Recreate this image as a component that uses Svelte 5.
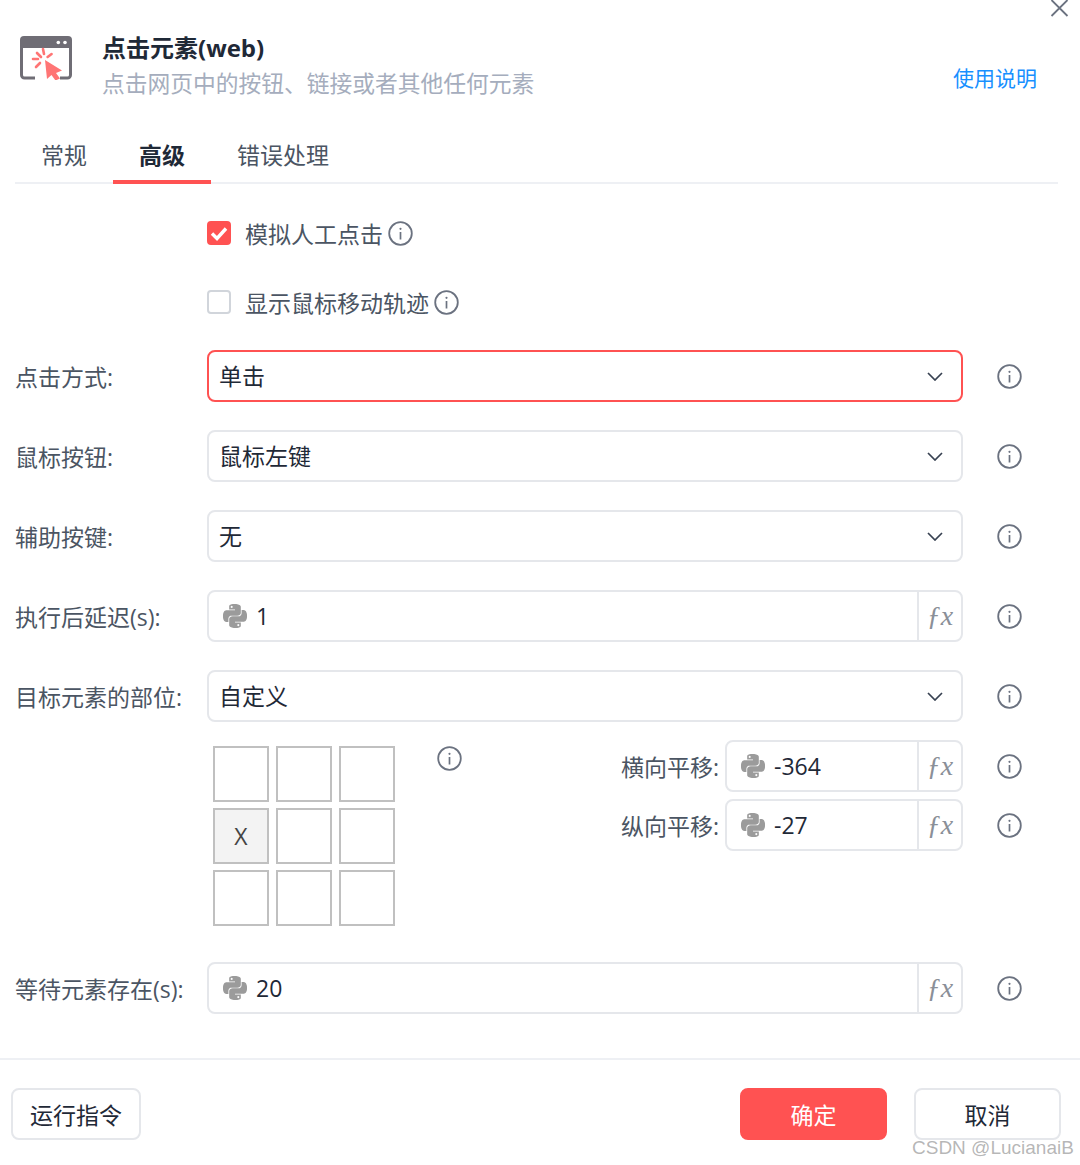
<script>
    const python = 'M14.25.18l.9.2.73.26.59.3.45.32.34.34.25.34.16.33.1.3.04.26.02.2-.01.13V8.5l-.05.63-.13.55-.21.46-.26.38-.3.31-.33.25-.35.19-.35.14-.33.1-.3.07-.26.04-.21.02H8.77l-.69.05-.59.14-.5.22-.41.27-.33.32-.27.35-.2.36-.15.37-.1.35-.07.32-.04.27-.02.21v3.06H3.17l-.21-.03-.28-.07-.32-.12-.35-.18-.36-.26-.36-.36-.35-.46-.32-.59-.28-.73-.21-.88-.14-1.05-.05-1.23.06-1.22.16-1.04.24-.87.32-.71.36-.57.4-.44.42-.33.42-.24.4-.16.36-.1.32-.05.24-.01h.16l.06.01h8.16v-.83H6.18l-.01-2.75-.02-.37.05-.34.11-.31.17-.28.25-.26.31-.23.38-.2.44-.18.51-.15.58-.12.64-.1.71-.06.77-.04.84-.02 1.27.05zm-6.3 1.98l-.23.33-.08.41.08.41.23.34.33.22.41.09.41-.09.33-.22.23-.34.08-.41-.08-.41-.23-.33-.33-.22-.41-.09-.41.09zm13.09 3.95l.28.06.32.12.35.18.36.27.36.35.35.47.32.59.28.73.21.88.14 1.04.05 1.23-.06 1.23-.16 1.04-.24.86-.32.71-.36.57-.4.45-.42.33-.42.24-.4.16-.36.09-.32.05-.24.02-.16-.01h-8.22v.82h5.84l.01 2.76.02.36-.05.34-.11.31-.17.29-.25.25-.31.24-.38.2-.44.17-.51.15-.58.13-.64.09-.71.07-.77.04-.84.01-1.27-.04-1.07-.14-.9-.2-.73-.25-.59-.3-.45-.33-.34-.34-.25-.34-.16-.33-.1-.3-.04-.25-.02-.2.01-.13v-5.34l.05-.64.13-.54.21-.46.26-.38.3-.32.33-.24.35-.2.35-.14.33-.1.3-.06.26-.04.21-.02.13-.01h5.84l.69-.05.59-.14.5-.21.41-.28.33-.32.27-.35.2-.36.15-.36.1-.35.07-.32.04-.28.02-.21V6.07h2.09l.14.01zm-6.47 14.25l-.23.33-.08.41.08.41.23.33.33.23.41.08.41-.08.33-.23.23-.33.08-.41-.08-.41-.23-.33-.33-.23-.41-.08-.41.08z';

    const tabs = [
        { label: '常规' },
        { label: '高级', active: true },
        { label: '错误处理' }
    ];

    const topRows = [
        { label: '点击方式:', value: '单击', focused: true },
        { label: '鼠标按钮:', value: '鼠标左键' },
        { label: '辅助按键:', value: '无' },
        { label: '执行后延迟(s):', value: '1', expr: true },
        { label: '目标元素的部位:', value: '自定义' }
    ];

    const offsets = [
        { label: '横向平移:', value: '-364' },
        { label: '纵向平移:', value: '-27' }
    ];

    const cells = ['', '', '', 'X', '', '', '', '', ''];
</script>

{#snippet info()}
    <svg class="info" viewBox="0 0 25 25" fill="none" stroke="#6b7280">
        <circle cx="12.5" cy="12.5" r="11.3" stroke-width="1.8" />
        <circle cx="12.5" cy="7.8" r="1.1" fill="#6b7280" stroke="none" />
        <path d="M12.5 11v7.5" stroke-width="1.7" />
    </svg>
{/snippet}

{#snippet exprInput(value)}
    <div class="field expr">
        <svg class="py" viewBox="0 0 24 24" fill="#9b9b9b"><path d={python} /></svg>
        <span class="value">{value}</span>
        <span class="fx">ƒx</span>
    </div>
{/snippet}

{#snippet selectInput(value, focused)}
    <div class="field select" class:focused>
        <span class="value">{value}</span>
        <svg class="chev" viewBox="0 0 16 9" fill="none" stroke="#374151" stroke-width="1.7">
            <path d="M1 1l7 7 7-7" />
        </svg>
    </div>
{/snippet}

<div class="dialog">
    <svg class="close" viewBox="0 0 18 18" fill="none" stroke="#6b7280" stroke-width="1.8">
        <path d="M1 1l16 16M17 1L1 17" />
    </svg>

    <header>
        <svg class="logo" viewBox="0 0 52 44">
            <path d="M0 12V4a4 4 0 0 1 4-4h44a4 4 0 0 1 4 4v8z" fill="#6f6d75" />
            <path d="M1.5 11v28a3 3 0 0 0 3 3H15M40 42h7.5a3 3 0 0 0 3-3V11" fill="none" stroke="#6f6d75" stroke-width="3" />
            <circle cx="38.3" cy="6.5" r="1.8" fill="#fff" />
            <circle cx="45" cy="6.5" r="1.8" fill="#fff" />
            <path d="M25 24l17 10.5-6 2.5 4 5.5-4.5 2-4-5.5-4.5 4z" fill="#ff7575" />
            <path d="M23 13l1 5M31.6 18l-4 3M17 17l4 4M13 23h5M16 31l4-4" stroke="#ff7575" stroke-width="2.6" stroke-linecap="round" fill="none" />
        </svg>
        <div class="titles">
            <div class="title">点击元素(web)</div>
            <div class="sub">点击网页中的按钮、链接或者其他任何元素</div>
        </div>
        <span class="help">使用说明</span>
    </header>

    <nav class="tabs">
        {#each tabs as tab}
            <div class="tab" class:active={tab.active}>{tab.label}</div>
        {/each}
    </nav>

    <section class="body">
        <div class="check-row">
            <span class="box checked">
                <svg viewBox="0 0 24 24" fill="none" stroke="#fff" stroke-width="3.4">
                    <path d="M5 12.5l5 5 9-10" />
                </svg>
            </span>
            <span>模拟人工点击</span>
            {@render info()}
        </div>
        <div class="check-row second">
            <span class="box"></span>
            <span>显示鼠标移动轨迹</span>
            {@render info()}
        </div>

        <div class="rows">
            {#each topRows as row}
                <div class="row">
                    <div class="label">{row.label}</div>
                    {#if row.expr}
                        {@render exprInput(row.value)}
                    {:else}
                        {@render selectInput(row.value, row.focused)}
                    {/if}
                    {@render info()}
                </div>
            {/each}
        </div>

        <div class="position">
            <div class="grid">
                {#each cells as cell}
                    <div class="cell" class:picked={cell}>{cell}</div>
                {/each}
            </div>
            <div class="grid-info">{@render info()}</div>
            <div class="offsets">
                {#each offsets as item}
                    <div class="offset">
                        <span class="offset-label">{item.label}</span>
                        {@render exprInput(item.value)}
                        {@render info()}
                    </div>
                {/each}
            </div>
        </div>

        <div class="row wait">
            <div class="label">等待元素存在(s):</div>
            {@render exprInput('20')}
            {@render info()}
        </div>
    </section>

    <footer>
        <button class="btn">运行指令</button>
        <div class="spacer"></div>
        <button class="btn primary">确定</button>
        <button class="btn cancel">取消</button>
    </footer>

    <div class="watermark">CSDN @LucianaiB</div>
</div>

<style>
    :global(body) {
        background: #fff;
    }

    .dialog {
        position: relative;
        width: 1080px;
        height: 1165px;
        overflow: hidden;
        background: #fff;
        font-family: "Open Sans", "Noto Sans CJK SC", sans-serif;
        font-size: 23px;
        color: #1f2937;
    }

    .close {
        position: absolute;
        top: -1px;
        right: 11px;
        width: 19px;
        height: 18px;
    }

    header {
        display: flex;
        align-items: flex-start;
        height: 128px;
        padding: 30px 43px 0 20px;
        box-sizing: border-box;
    }

    .logo {
        width: 52px;
        height: 44px;
        margin-top: 6px;
        flex-shrink: 0;
    }

    .titles {
        margin-left: 30px;
        flex: 1;
    }

    .title {
        font-weight: 700;
        font-size: 24px;
        line-height: 36px;
    }

    .sub {
        font-size: 22.75px;
        line-height: 36px;
        color: #a5adbd;
    }

    .help {
        font-size: 21px;
        line-height: 30px;
        color: #1890ff;
        margin-top: 33px;
    }

    .tabs {
        display: flex;
        margin: 0 22px 0 15px;
        height: 56px;
        box-sizing: border-box;
        border-bottom: 2px solid #eef0f4;
    }

    .tab {
        padding: 0 26px;
        height: 56px;
        line-height: 54px;
        box-sizing: border-box;
        color: #4b5563;
    }

    .tab.active {
        font-weight: 700;
        color: #1f2937;
        border-bottom: 4px solid #ff5252;
    }

    .body {
        height: 874px;
        padding: 37px 0 0 15px;
        box-sizing: border-box;
    }

    .check-row {
        display: flex;
        align-items: center;
        gap: 5px;
        height: 24px;
        margin-left: 192px;
        color: #4b5563;
    }

    .check-row.second {
        margin-top: 45px;
    }

    .box {
        width: 24px;
        height: 24px;
        margin-right: 9px;
        box-sizing: border-box;
        border: 2px solid #d1d5db;
        border-radius: 4px;
        flex-shrink: 0;
    }

    .box.checked {
        background: #ff5252;
        border-color: #ff5252;
    }

    .box svg {
        display: block;
        width: 24px;
        height: 24px;
        margin: -2px;
    }

    .info {
        width: 25px;
        height: 25px;
        flex-shrink: 0;
    }

    .rows {
        display: flex;
        flex-direction: column;
        gap: 28px;
        margin-top: 36px;
    }

    .row {
        display: flex;
        align-items: center;
    }

    .row > .info {
        margin-left: 34px;
    }

    .label {
        width: 192px;
        flex-shrink: 0;
        color: #4b5563;
        white-space: nowrap;
    }

    .field {
        display: flex;
        align-items: center;
        width: 756px;
        height: 52px;
        box-sizing: border-box;
        border: 2px solid #e5e7eb;
        border-radius: 8px;
        flex-shrink: 0;
    }

    .field.focused {
        border-color: #ff5252;
    }

    .select {
        justify-content: space-between;
        padding: 0 18px 0 10px;
    }

    .chev {
        width: 16px;
        height: 9px;
    }

    .expr {
        padding-left: 14px;
    }

    .py {
        width: 24px;
        height: 24px;
        margin-right: 9px;
        flex-shrink: 0;
    }

    .value {
        flex: 1;
        line-height: 48px;
    }

    .fx {
        width: 44px;
        height: 100%;
        box-sizing: border-box;
        border-left: 2px solid #e5e7eb;
        text-align: center;
        line-height: 48px;
        font-family: "Liberation Serif", serif;
        font-style: italic;
        font-size: 28px;
        color: #8a8f98;
    }

    .position {
        display: flex;
        align-items: flex-start;
        margin: 18px 0 0 198px;
    }

    .grid {
        display: grid;
        grid-template-columns: repeat(3, 56px);
        grid-auto-rows: 56px;
        gap: 6px 7px;
        margin-top: 6px;
    }

    .cell {
        display: flex;
        align-items: center;
        justify-content: center;
        box-sizing: border-box;
        border: 2px solid #c0c0c0;
        color: #444;
    }

    .cell.picked {
        background: #f3f3f3;
    }

    .grid-info {
        margin: 6px 0 0 42px;
        height: 25px;
    }

    .offsets {
        display: flex;
        flex-direction: column;
        gap: 7px;
        margin-left: auto;
    }

    .offset {
        display: flex;
        align-items: center;
    }

    .offset-label {
        margin-right: 6px;
        color: #4b5563;
        white-space: nowrap;
    }

    .offset .field {
        width: 238px;
    }

    .offset .info {
        margin-left: 34px;
        margin-right: 58px;
    }

    .position {
        width: 867px;
    }

    .wait {
        margin-top: 36px;
    }

    footer {
        display: flex;
        align-items: flex-start;
        height: 107px;
        padding: 28px 19px 0 11px;
        box-sizing: border-box;
        border-top: 2px solid #eef0f4;
    }

    .spacer {
        flex: 1;
    }

    .btn {
        width: 130px;
        height: 52px;
        box-sizing: border-box;
        border: 2px solid #e5e7eb;
        border-radius: 8px;
        background: #fff;
        font: inherit;
        color: #1f2937;
        padding: 0;
    }

    .btn.primary {
        width: 147px;
        background: #ff5252;
        border-color: #ff5252;
        color: #fff;
    }

    .btn.cancel {
        width: 147px;
        margin-left: 27px;
    }

    .watermark {
        position: absolute;
        left: 912px;
        top: 1136px;
        font-family: "Liberation Sans", sans-serif;
        font-size: 19px;
        line-height: 24px;
        white-space: nowrap;
        color: rgba(120, 120, 120, 0.55);
    }
</style>
